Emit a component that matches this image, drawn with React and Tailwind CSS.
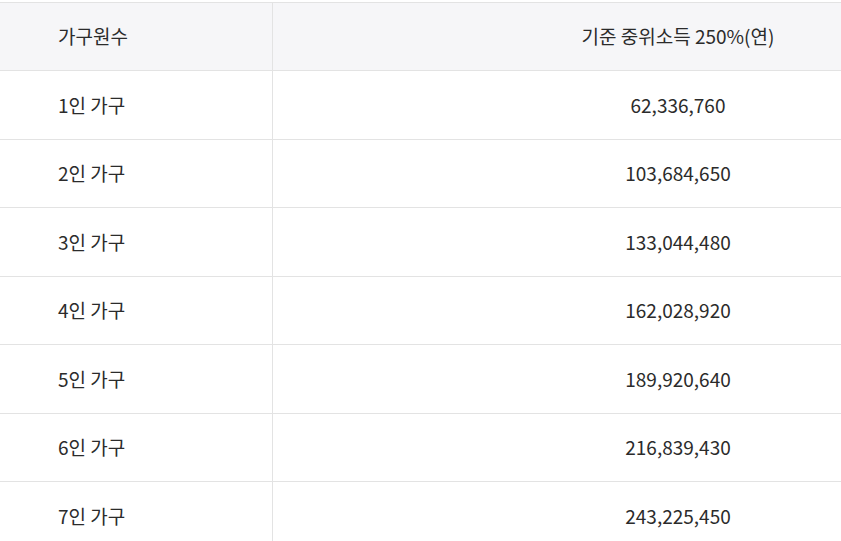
export default function App() {
  const rows = [
    ["1인 가구", "62,336,760"],
    ["2인 가구", "103,684,650"],
    ["3인 가구", "133,044,480"],
    ["4인 가구", "162,028,920"],
    ["5인 가구", "189,920,640"],
    ["6인 가구", "216,839,430"],
    ["7인 가구", "243,225,450"],
  ];
  return (
    <div className="w-[841px] h-[541px] overflow-hidden bg-white pt-[2px]" style={{ fontFamily: '"Noto Sans CJK KR", "Noto Sans", sans-serif' }}>
      <div className="w-[1083px] border-t border-[#e3e3e3] text-[19px] text-[#2b2b2b]">
        <div className="flex h-[68px] bg-[#f6f6f8] border-b border-[#e3e3e3]">
          <div className="w-[273px] shrink-0 flex items-center pl-[58px] border-r border-[#e3e3e3]">가구원수</div>
          <div className="flex-1 flex items-center justify-center">기준 중위소득 250%(연)</div>
        </div>
        {rows.map(([a, b]) => (
          <div key={a} className="flex h-[68.5px] border-b border-[#e3e3e3]">
            <div className="w-[273px] shrink-0 flex items-center pl-[58px] border-r border-[#e3e3e3]">{a}</div>
            <div className="flex-1 flex items-center justify-center">{b}</div>
          </div>
        ))}
      </div>
    </div>
  );
}
